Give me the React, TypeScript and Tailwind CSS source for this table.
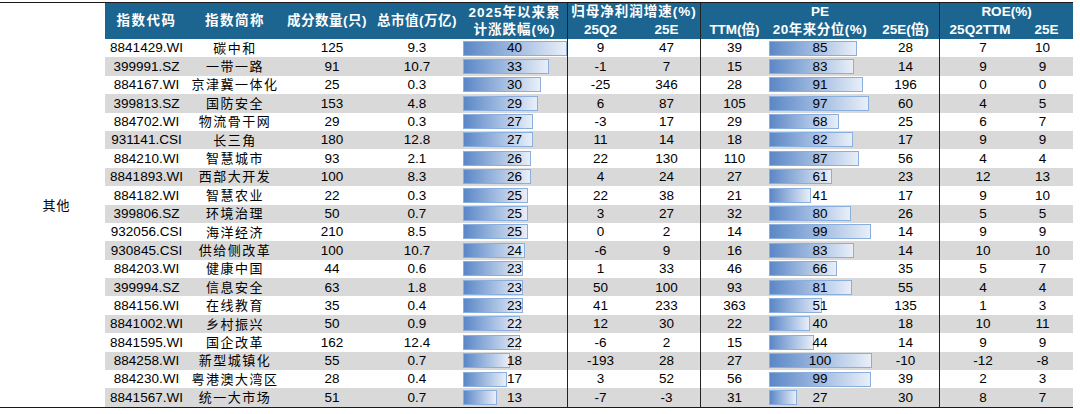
import React from 'react';

type Row = [string, string, number, string, number, number, number, number, number, number, number, number];

const rows: Row[] = [
  ['8841429.WI', '碳中和', 125, '9.3', 40, 9, 47, 39, 85, 28, 7, 10],
  ['399991.SZ', '一带一路', 91, '10.7', 33, -1, 7, 15, 83, 14, 9, 9],
  ['884167.WI', '京津冀一体化', 25, '0.3', 30, -25, 346, 28, 91, 196, 0, 0],
  ['399813.SZ', '国防安全', 153, '4.8', 29, 6, 87, 105, 97, 60, 4, 5],
  ['884702.WI', '物流骨干网', 29, '0.3', 27, -3, 17, 29, 68, 25, 6, 7],
  ['931141.CSI', '长三角', 180, '12.8', 27, 11, 14, 18, 82, 17, 9, 9],
  ['884210.WI', '智慧城市', 93, '2.1', 26, 22, 130, 110, 87, 56, 4, 4],
  ['8841893.WI', '西部大开发', 100, '8.3', 26, 4, 24, 27, 61, 23, 12, 13],
  ['884182.WI', '智慧农业', 22, '0.3', 25, 22, 38, 21, 41, 17, 9, 10],
  ['399806.SZ', '环境治理', 50, '0.7', 25, 3, 27, 32, 80, 26, 5, 5],
  ['932056.CSI', '海洋经济', 210, '8.5', 25, 0, 2, 14, 99, 14, 9, 9],
  ['930845.CSI', '供给侧改革', 100, '10.7', 24, -6, 9, 16, 83, 14, 10, 10],
  ['884203.WI', '健康中国', 44, '0.6', 23, 1, 33, 46, 66, 35, 5, 7],
  ['399994.SZ', '信息安全', 63, '1.8', 23, 50, 100, 93, 81, 55, 4, 4],
  ['884156.WI', '在线教育', 35, '0.4', 23, 41, 233, 363, 51, 135, 1, 3],
  ['8841002.WI', '乡村振兴', 50, '0.9', 22, 12, 30, 22, 40, 18, 10, 11],
  ['8841595.WI', '国企改革', 162, '12.4', 22, -6, 2, 15, 44, 14, 9, 9],
  ['884258.WI', '新型城镇化', 55, '0.7', 18, -193, 28, 27, 100, -10, -12, -8],
  ['884230.WI', '粤港澳大湾区', 28, '0.4', 17, 3, 52, 56, 99, 39, 2, 3],
  ['8841567.WI', '统一大市场', 51, '0.7', 13, -7, -3, 31, 27, 30, 8, 7],
];

const cols = 'grid-cols-[83px_94px_90px_90px_105px_66px_67px_68px_104px_67px_81px_53px]';
const font = "font-['Liberation_Sans','Noto_Sans_CJK_SC',sans-serif]";

const Bar = ({ value, width }: { value: number; width: number }) => (
  <div className="relative flex items-center justify-center h-full">
    <div
      className="absolute left-[1px] top-[1.5px] h-[15px] border border-[#8aaede] bg-gradient-to-r from-[#5b87c6] to-[#e9eff8]"
      style={{ width }}
    />
    <span className="relative">{value}</span>
  </div>
);

const Cell = ({ children, line }: { children: React.ReactNode; line?: boolean }) => (
  <div className={`flex items-center justify-center h-full ${line ? 'border-l border-[#222]' : ''}`}>{children}</div>
);

export default function App() {
  return (
    <div className={`w-[1080px] h-[414px] bg-white pt-[2px] text-black ${font}`}>
      <div className="w-[1073px] border-t-[1.5px] border-b-[1.5px] border-[#1a1a1a]">
        {/* header */}
        <div className="flex">
          <div className="w-[105px] bg-white" />
          <div className={`grid ${cols} grid-rows-[18px_18px] bg-[#1b6590] text-white font-bold text-[13.5px] leading-none`}>
            <div className="row-span-2 flex items-center justify-center tracking-[1.5px]">指数代码</div>
            <div className="row-span-2 flex items-center justify-center tracking-[1.5px]">指数简称</div>
            <div className="row-span-2 flex items-center justify-center tracking-[0.5px]">成分数量(只)</div>
            <div className="row-span-2 flex items-center justify-center tracking-[0.5px]">总市值(万亿)</div>
            <div className="row-span-2 flex flex-col items-center justify-center gap-[4px] tracking-[1px]">
              <span>2025年以来累</span>
              <span>计涨跌幅(%)</span>
            </div>
            <div className="col-span-2 flex items-center justify-center border-l border-[#222] tracking-[1px]">归母净利润增速(%)</div>
            <div className="col-span-3 flex items-center justify-center border-l border-[#222]">PE</div>
            <div className="col-span-2 flex items-center justify-center border-l border-[#222]">ROE(%)</div>
            <div className="flex items-center justify-center border-l border-[#222]">25Q2</div>
            <div className="flex items-center justify-center">25E</div>
            <div className="flex items-center justify-center border-l border-[#222]">TTM(倍)</div>
            <div className="flex items-center justify-center tracking-[0.5px]">20年来分位(%)</div>
            <div className="flex items-center justify-center">25E(倍)</div>
            <div className="flex items-center justify-center border-l border-[#222]">25Q2TTM</div>
            <div className="flex items-center justify-center">25E</div>
          </div>
        </div>
        {/* body */}
        <div className="flex">
          <div className="w-[105px] flex items-center justify-center pl-[8px] pb-[34px] text-[13px] tracking-[1px]">其他</div>
          <div className="flex flex-col">
            {rows.map((r, i) => (
              <div
                key={r[0]}
                className={`grid ${cols} h-[18.4px] text-[13.5px] leading-none ${i % 2 === 1 ? 'bg-[#d9d9d9]' : 'bg-white'}`}
              >
                <Cell>{r[0]}</Cell>
                <Cell><span className="text-[13px] tracking-[1.5px]">{r[1]}</span></Cell>
                <Cell><span className="pl-[10px]">{r[2]}</span></Cell>
                <Cell>{r[3]}</Cell>
                <Bar value={r[4]} width={(r[4] / 40) * 104} />
                <Cell line>{r[5]}</Cell>
                <Cell>{r[6]}</Cell>
                <Cell line>{r[7]}</Cell>
                <Bar value={r[8]} width={(r[8] / 100) * 103} />
                <Cell>{r[9]}</Cell>
                <Cell line><span className="pl-[6px]">{r[10]}</span></Cell>
                <Cell><span className="pr-[8px]">{r[11]}</span></Cell>
              </div>
            ))}
          </div>
        </div>
      </div>
    </div>
  );
}
